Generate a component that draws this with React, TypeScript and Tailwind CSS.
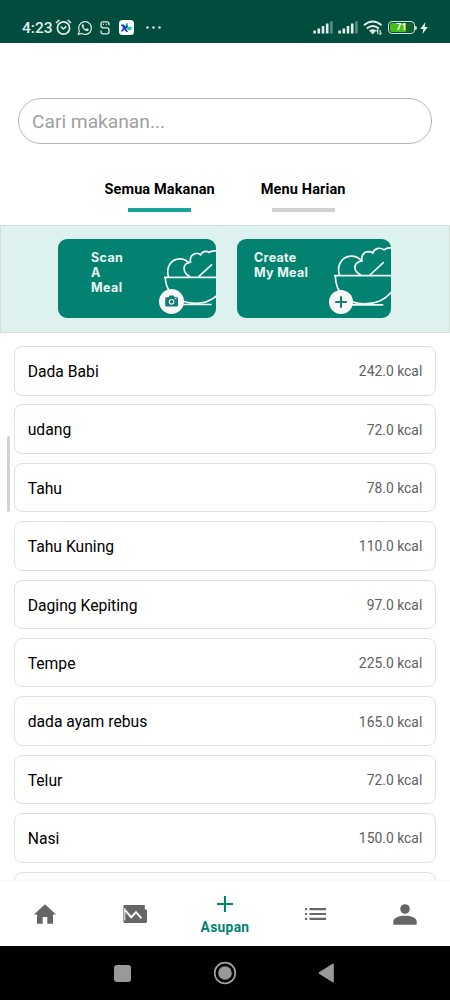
import { useState } from 'react';

interface Food {
  name: string;
  kcal: string;
}

const foods: Food[] = [
  { name: 'Dada Babi', kcal: '242.0' },
  { name: 'udang', kcal: '72.0' },
  { name: 'Tahu', kcal: '78.0' },
  { name: 'Tahu Kuning', kcal: '110.0' },
  { name: 'Daging Kepiting', kcal: '97.0' },
  { name: 'Tempe', kcal: '225.0' },
  { name: 'dada ayam rebus', kcal: '165.0' },
  { name: 'Telur', kcal: '72.0' },
  { name: 'Nasi', kcal: '150.0' },
];

function Signal() {
  return (
    <svg className="h-[13px] w-5" viewBox="0 0 20 13">
      <g fill="#e3ece9">
        <rect height="3" width="2.6" x="0.3" y="9.5" />
        <rect height="5" width="2.6" x="4.5" y="7.5" />
        <rect height="7.5" width="2.6" x="8.7" y="5" />
        <rect height="10" width="2.6" x="12.9" y="2.5" />
        <rect height="12.2" opacity="0.4" width="2.6" x="17.1" y="0.3" />
      </g>
    </svg>
  );
}

function StatusBar() {
  return (
    <div className="flex h-[43px] shrink-0 items-center bg-[#004d40] pt-[12px] pl-[22px] text-[#e3ece9]">
      <span className="w-[33px] pt-px font-medium text-[15.5px] leading-4">4:23</span>
      <svg className="h-[17px] w-[17px]" fill="none" stroke="currentColor" viewBox="0 0 17 17">
        <circle cx="8.5" cy="9" r="6.1" strokeWidth="1.7" />
        <path d="M1 4 4.3 1M12.7 1 16 4" strokeWidth="1.6" />
        <path d="m5.7 7.7 2.8 2.3 2.8-2.6" strokeWidth="1.5" />
      </svg>
      <svg className="ml-[5px] h-4 w-4" fill="none" stroke="currentColor" viewBox="0 0 16 16">
        <path d="m1.3 14.5 1-3.7a6.4 6.4 0 1 1 2.5 2.7z" strokeWidth="1.2" />
        <path
          d="M5.6 4.3c-1.2.6-1 2.2 0 3.7 1.2 1.8 3.3 3.4 4.9 3 1-.3 1.4-1 1.2-1.8l-1.8-.9-.9 1c-1.2-.5-2-1.3-2.6-2.4l.6-.9-.7-1.7z"
          fill="currentColor"
          stroke="none"
        />
      </svg>
      <svg className="ml-[7px] h-[14px] w-[10px]" fill="none" stroke="currentColor" viewBox="0 0 10 14">
        <path
          d="M9 4.2V2.8Q9 .9 7 .9H3Q1 .9 1 2.8v2Q1 6.8 3 6.8h4q2 0 2 2v2q0 2-2 2H3q-2 0-2-2V9.4"
          strokeWidth="1.3"
        />
        <path d="M3.4 2.6v1.6M6.4 2.6v1.6" strokeWidth=".9" />
      </svg>
      <svg className="ml-[9px] h-[15px] w-[15px]" viewBox="0 0 15 15">
        <rect fill="#fff" height="15" rx="3.5" width="15" />
        <path d="M6.7 3.2h2.3v3.6h3.8v1.2q0 2.2-2.2 2.2H9.4L6.7 7.5z" fill="#19c9a8" />
        <path d="M2 4.6h2.7l1.6 2 1.5-1.4 1.2 1-2 2.2 2.3 3.3H7L5.4 9.6l-1.8 1.9H1.7L4 8.2 3.2 6.1H2z" fill="#1737c8" />
      </svg>
      <svg className="ml-3 h-[3px] w-[15px]" fill="currentColor" viewBox="0 0 15 3">
        <circle cx="1.5" cy="1.5" r="1.2" />
        <circle cx="7.5" cy="1.5" r="1.2" />
        <circle cx="13.5" cy="1.5" r="1.2" />
      </svg>
      <div className="mr-[22px] ml-auto flex items-center">
        <Signal />
        <span className="w-[5px]" />
        <Signal />
        <svg className="ml-[5px] h-[15px] w-5" fill="none" stroke="currentColor" viewBox="0 0 20 15">
          <path d="M1 5.2q8.8-7.5 17.6 0M3.8 8.5q6-5 12 0M6.7 11.3q3-2.3 6 0" strokeWidth="1.9" />
          <path d="m7.5 12 2.2-1.5 2.2 1.5-2.2 2.5z" fill="currentColor" stroke="none" />
          <path d="M14.8 14.2v-4.4l-1.3 1.5M17.2 10v4.3l1.4-1.5" strokeWidth="1.1" />
        </svg>
        <span className="ml-[5px] flex h-[13px] w-[27px] items-center rounded-[4px] border border-[#d5dfdc] p-px">
          <span className="flex h-full w-full items-center justify-center rounded-[2px] bg-gradient-to-r from-[#49bd16] from-70% to-[#186129] to-70% font-bold text-[9px] text-white leading-none">
            71
          </span>
        </span>
        <span className="h-1 w-[2px] rounded-r bg-[#d5dfdc]" />
        <svg className="ml-[3px] h-3 w-2" fill="currentColor" viewBox="0 0 8 12">
          <path d="M5.4 0 .2 7h3L2.5 12 7.8 5H4.7z" />
        </svg>
      </div>
    </div>
  );
}

function MealCards() {
  return (
    <div className="flex h-[108px] shrink-0 gap-[21px] border border-[#d5dedc] bg-[#ddf1ef] pt-[13px] pl-[57px] font-['Inter',sans-serif] font-bold text-[12.5px] text-[#eaf6f3] leading-[15px] tracking-[0.4px]">
      <button className="relative h-[79px] w-[158px] overflow-hidden rounded-[9px] bg-[#048271] text-left" type="button">
        <span className="absolute top-[11px] left-[33px]">
          Scan
          <br />A<br />
          Meal
        </span>
        {/* salad bowl, runs past the right edge of the card */}
        <svg className="absolute inset-0 h-[79px] w-[158px]" fill="none" viewBox="0 0 158 79">
          <g stroke="#f0f8f6" strokeWidth="1.7">
            <path d="M106 38.3h54M107.2 38.3c.5 15.5 12.3 26 31 26 8 0 15-2.6 21-8" />
            <path d="M118 65.5h35.7" />
            <path d="M110.6 38.3C107.5 28.5 113 20 121.3 19.8c4.5-.1 7.8 1.7 10 4.6" />
            <path d="M132.3 37.8c-8.3-4-8.3-13.3.2-14.8-1-4.8 2-8.8 6.5-8.7 1.6 0 2.8.6 3.7 1.5 1.3-3.3 5.3-4.4 8.3-2.3 2.3-1.8 5-2.1 8-1.3" />
            <path d="m141 37.3 12.5-11.5" strokeLinecap="round" />
          </g>
        </svg>
        <svg className="absolute top-[49.5px] left-[101px] h-[25px] w-[25px]" viewBox="0 0 25 25">
          <circle cx="12.5" cy="12.5" fill="#f7f7f7" r="12.5" />
          <path
            d="M7.4 8.2h2l1.2-1.8h4l1.2 1.8h2q1.2 0 1.2 1.2v6.8q0 1.2-1.2 1.2H7.4q-1.2 0-1.2-1.2V9.4q0-1.2 1.2-1.2"
            fill="#137d70"
          />
          <circle cx="12.6" cy="12.8" fill="none" r="2.3" stroke="#e5f1ef" strokeWidth="1.1" />
          <path d="M15.8 9.7h1.6" stroke="#e5f1ef" />
        </svg>
      </button>
      <button className="relative h-[79px] w-[154px] overflow-hidden rounded-[9px] bg-[#048271] text-left" type="button">
        <span className="absolute top-[11px] left-[17px] tracking-[0.3px]">
          Create
          <br />
          My Meal
        </span>
        <svg className="absolute inset-0 h-[79px] w-[154px]" fill="none" viewBox="0 0 154 79">
          <g stroke="#f0f8f6" strokeWidth="1.7">
            <path d="M97 36.7h59M98.3 36.7c.4 17 11 28.2 29.3 28.2 12 0 21.5-4.9 27.5-12.8" />
            <path d="M112 65.8h34.3" />
            <path d="M102.7 36.7C99 26.5 105 17.5 114 17.2c4.5-.1 8.2 1.8 10.7 4.9" />
            <path d="M124.3 36.2c-9-4-8.3-12.7.7-14.4-1.2-5 1.8-9 6.3-9.1 1.7 0 3.4.5 4.5 1.3 1.3-4.5 6.8-6.2 11.2-3.2 2.3-1.9 5-2.3 8-1.7" />
            <path d="m133 36 13.3-12.3" strokeLinecap="round" />
          </g>
        </svg>
        <svg className="absolute top-[50.5px] left-[91.5px] h-6 w-6" viewBox="0 0 24 24">
          <circle cx="12" cy="12" fill="#f7f7f7" r="12" />
          <path d="M12 6.2v11.6M6.2 12h11.6" stroke="#16806f" strokeWidth="2.1" />
        </svg>
      </button>
    </div>
  );
}

function BottomNav() {
  return (
    <div className="z-10 grid h-[66px] shrink-0 grid-cols-5 items-center border-[#f7f7f7] border-t bg-white text-[#666]">
      <svg className="mx-auto h-5 w-[22px]" fill="currentColor" viewBox="0 0 22 20">
        <path d="M11 .3 0 10.5h3v9.2h5.7v-6.8h4.6v6.8H19v-9.2h3z" />
      </svg>
      <svg className="mx-auto mt-px h-[18px] w-6" viewBox="0 0 24 18">
        <path
          d="M1.5 0h20.3v3.5q0 1.2 1.2 1.2h1v11.8q0 1.5-1.5 1.5h-21Q.4 18 .4 16.5v-15Q.4 0 1.5 0"
          fill="currentColor"
        />
        <path d="M1.8 3v12.5" stroke="#fff" />
        <path d="m2 5.2 6.2 7 4.8-5 5.5 6.2" fill="none" stroke="#fff" strokeWidth="2" />
      </svg>
      <div className="flex flex-col items-center pt-[4px] text-[#048271]">
        <svg className="h-4 w-4" stroke="currentColor" strokeWidth="2" viewBox="0 0 16 16">
          <path d="M8 0v16M0 8h16" />
        </svg>
        <span className="mt-[7px] font-bold text-[13.8px] leading-4 tracking-[0.3px]">Asupan</span>
      </div>
      <svg className="mx-auto h-3 w-[21px]" fill="currentColor" viewBox="0 0 21 12">
        <path d="M0 0h2v2.2H0zM4.5 0H21v2.2H4.5zM0 4.9h2v2.2H0zM4.5 4.9H21v2.2H4.5zM0 9.8h2V12H0zM4.5 9.8H21V12H4.5z" />
      </svg>
      <svg className="mx-auto mt-[2px] h-[21px] w-6" fill="currentColor" viewBox="0 0 24 21">
        <circle cx="12" cy="5" r="4.8" />
        <path d="M.3 20.7v-3.2C.3 13.7 6 11.7 12 11.7s11.7 2 11.7 5.8v3.2z" />
      </svg>
    </div>
  );
}

export default function App() {
  const [search, setSearch] = useState('');

  return (
    <div className="flex h-[1000px] w-[450px] flex-col overflow-hidden bg-white font-['Roboto',sans-serif]">
      <StatusBar />
      <input
        className="mx-[18px] mt-[55px] h-[46px] shrink-0 rounded-full border border-[#b5b5b5] px-[13px] pt-px text-[19.2px] text-black outline-none placeholder:text-[#a0a0a0]"
        onChange={(e) => setSearch(e.target.value)}
        placeholder="Cari makanan..."
        value={search}
      />
      <div className="mt-[36px] flex h-[45px] shrink-0 justify-center gap-[46px] font-bold text-[14.5px] text-black leading-[18px] tracking-[0.12px]">
        <button className="flex flex-col items-center" type="button">
          <span className="pt-px">Semua Makanan</span>
          <span className="mt-[9px] h-1 w-[63px] bg-[#1ba29b]" />
        </button>
        <button className="flex flex-col items-center" type="button">
          <span className="pt-px">Menu Harian</span>
          <span className="mt-[9px] h-1 w-[63px] bg-[#d0d0d0]" />
        </button>
      </div>
      <MealCards />
      <div className="relative min-h-0 flex-1 overflow-hidden px-[14px] pt-[13px]">
        <span className="absolute top-[103px] left-[7px] h-[76px] w-[3px] rounded-sm bg-[#d2d2d2]" />
        <ul className="flex flex-col gap-[8.9px]">
          {foods.map((food) => (
            <li
              className="flex h-[49.5px] shrink-0 items-center justify-between rounded-[8px] border border-[#e1e1e1] px-[12.7px] pt-[2px]"
              key={food.name}
            >
              <span className="text-[15.7px] text-black">{food.name}</span>
              <span className="text-[13.9px] text-[#606060]">{food.kcal} kcal</span>
            </li>
          ))}
          {/* next item, still below the fold */}
          <li className="h-[49.5px] shrink-0 rounded-[8px] border border-[#e1e1e1]" />
        </ul>
      </div>
      <BottomNav />
      <div className="flex h-[54px] shrink-0 items-center bg-black">
        <span className="ml-[114px] h-[17px] w-[17px] rounded-[3px] bg-[#999]" />
        <svg className="ml-[82px] h-6 w-6" viewBox="0 0 24 24">
          <circle cx="12" cy="12" fill="none" r="10.3" stroke="#a0a0a0" strokeWidth="1.7" />
          <circle cx="12" cy="12" fill="#999" r="6.8" />
        </svg>
        <svg className="ml-[81px] h-5 w-4" fill="#999" viewBox="0 0 16 20">
          <path d="M1 9.2 14.6.7q1.2-.6 1.2.8v17q0 1.4-1.2.8L1 10.8q-1-.8 0-1.6" />
        </svg>
      </div>
    </div>
  );
}
